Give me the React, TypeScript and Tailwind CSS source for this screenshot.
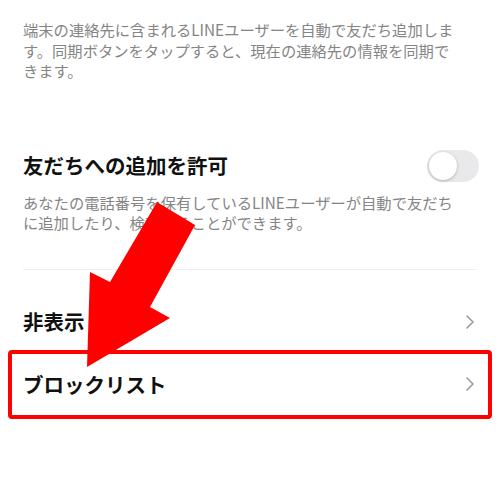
const font = { fontFamily: '"Noto Sans CJK JP", "Noto Sans", sans-serif' };

function Chevron() {
  return (
    <svg width="10" height="16" viewBox="0 0 10 16" className="shrink-0">
      <path d="M2 2l6 6-6 6" fill="none" stroke="#9a9a9a" strokeWidth="1.6" strokeLinecap="round" strokeLinejoin="round" />
    </svg>
  );
}

export default function App() {
  return (
    <div className="relative w-[500px] h-[483px] bg-white overflow-hidden" style={font}>
      {/* contacts sync note */}
      <p className="pl-[23px] pt-[19px] text-[15.3px] leading-[20.5px] text-[#858585] whitespace-nowrap">
        端末の連絡先に含まれるLINEユーザーを自動で友だち追加しま<br />
        す。同期ボタンをタップすると、現在の連絡先の情報を同期で<br />
        きます。
      </p>

      {/* allow friend add */}
      <div className="mt-[69px] pl-[23px] pr-[21px] flex items-center justify-between h-[32px]">
        <span className="text-[20.5px] font-bold text-[#111]">友だちへの追加を許可</span>
        <div className="w-[52px] h-[32px] rounded-full bg-[#e9e9eb] p-[2px]">
          <div className="w-[28px] h-[28px] rounded-full bg-white shadow-[0_1px_3px_rgba(0,0,0,0.25)]" />
        </div>
      </div>
      <p className="pl-[23px] pt-[10px] text-[15.3px] leading-[20.5px] text-[#858585] whitespace-nowrap">
        あなたの電話番号を保有しているLINEユーザーが自動で友だち<br />
        に追加したり、検索することができます。
      </p>

      <div className="mx-[23px] mt-[36px] h-px bg-[#efefef]" />

      {/* rows */}
      <div className="mt-[24px] h-[56px] pl-[23px] pr-[25px] flex items-center justify-between">
        <span className="text-[20.5px] font-bold text-[#111]">非表示</span>
        <Chevron />
      </div>
      <div className="mx-[8px] h-[69px] border-4 border-[#ff0000] rounded-[4px] pl-[11px] pr-[13px] flex items-center justify-between">
        <span className="text-[20.5px] font-bold text-[#111]">ブロックリスト</span>
        <Chevron />
      </div>

      {/* annotation arrow */}
      <svg className="absolute left-0 top-0 pointer-events-none" width="500" height="483" viewBox="0 0 500 483">
        <polygon points="157,202 195,225 150,307 170,318 87,367 90,272 110,282" fill="#ff0000" />
      </svg>
    </div>
  );
}
